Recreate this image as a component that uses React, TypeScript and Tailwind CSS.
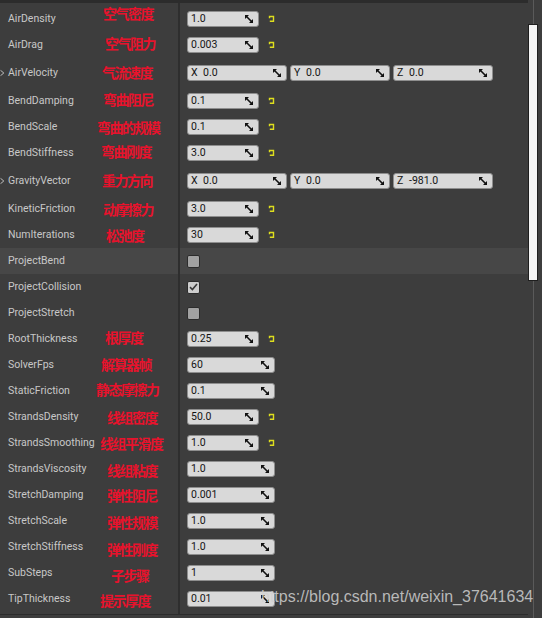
import React from 'react'

type Row = {
  label: string
  kind: 'num' | 'vec' | 'bool'
  value?: string
  reset?: boolean
  vec?: [string, string, string]
  checked?: boolean
  hover?: boolean
  ann?: string
  annCls?: string
}

const rows: Row[] = [
  { label: 'AirDensity', kind: 'num', value: '1.0', reset: true, ann: '空气密度', annCls: 'left-[103px] mt-[-6px]' },
  { label: 'AirDrag', kind: 'num', value: '0.003', reset: true, ann: '空气阻力', annCls: 'left-[105px] mt-[-2px]' },
  { label: 'AirVelocity', kind: 'vec', vec: ['0.0', '0.0', '0.0'], ann: '气流速度', annCls: 'left-[102px] mt-[-1px]' },
  { label: 'BendDamping', kind: 'num', value: '0.1', reset: true, ann: '弯曲阻尼', annCls: 'left-[103px] mt-[-2px]' },
  { label: 'BendScale', kind: 'num', value: '0.1', reset: true, ann: '弯曲的规模', annCls: 'left-[97px] mt-[0px]' },
  { label: 'BendStiffness', kind: 'num', value: '3.0', reset: true, ann: '弯曲刚度', annCls: 'left-[101px] mt-[-2px]' },
  { label: 'GravityVector', kind: 'vec', vec: ['0.0', '0.0', '-981.0'], ann: '重力方向', annCls: 'left-[102px] mt-[-1px]' },
  { label: 'KineticFriction', kind: 'num', value: '3.0', reset: true, ann: '动摩擦力', annCls: 'left-[103px] mt-[0px]' },
  { label: 'NumIterations', kind: 'num', value: '30', reset: true, ann: '松弛度', annCls: 'left-[106px] mt-[0px]' },
  { label: 'ProjectBend', kind: 'bool', hover: true },
  { label: 'ProjectCollision', kind: 'bool', checked: true },
  { label: 'ProjectStretch', kind: 'bool' },
  { label: 'RootThickness', kind: 'num', value: '0.25', reset: true, ann: '根厚度', annCls: 'left-[105px] mt-[-2px]' },
  { label: 'SolverFps', kind: 'num', value: '60', ann: '解算器帧', annCls: 'left-[101px] mt-[-1px]' },
  { label: 'StaticFriction', kind: 'num', value: '0.1', ann: '静态摩擦力', annCls: 'left-[96px] mt-[-2px]' },
  { label: 'StrandsDensity', kind: 'num', value: '50.0', reset: true, ann: '线组密度', annCls: 'left-[107px] mt-[0px]' },
  { label: 'StrandsSmoothing', kind: 'num', value: '1.0', reset: true, ann: '线组平滑度', annCls: 'left-[100px] mt-[0px]' },
  { label: 'StrandsViscosity', kind: 'num', value: '1.0', ann: '线组粘度', annCls: 'left-[107px] mt-[1px]' },
  { label: 'StretchDamping', kind: 'num', value: '0.001', ann: '弹性阻尼', annCls: 'left-[107px] mt-[0px]' },
  { label: 'StretchScale', kind: 'num', value: '1.0', ann: '弹性规模', annCls: 'left-[107px] mt-[1px]' },
  { label: 'StretchStiffness', kind: 'num', value: '1.0', ann: '弹性刚度', annCls: 'left-[107px] mt-[2px]' },
  { label: 'SubSteps', kind: 'num', value: '1', ann: '子步骤', annCls: 'left-[111px] mt-[2px]' },
  { label: 'TipThickness', kind: 'num', value: '0.01', ann: '提示厚度', annCls: 'left-[100px] mt-[1px]' },
]

function DragIcon() {
  return (
    <svg width="8" height="8" viewBox="0 0 8 8" className="shrink-0">
      <path d="M0 0 H4 L0 4 Z M8 8 H4 L8 4 Z" fill="#111" />
      <path d="M1.5 1.5 L6.5 6.5" stroke="#111" strokeWidth="1.6" />
    </svg>
  )
}

function ResetIcon() {
  return (
    <svg width="8" height="8" viewBox="0 0 8 8" className="ml-[9px] shrink-0">
      <path d="M1.5 3.2 V1.5 H5.5 V6.3 H1.8" fill="none" stroke="#dede1e" strokeWidth="1.4" />
    </svg>
  )
}

function NumField({ value, wide }: { value: string; wide: boolean }) {
  return (
    <div
      className={`flex h-[16px] items-center justify-between rounded-[3px] border border-[#8e8e8e] bg-[#d9d9d9] pl-[3px] pr-[5px] ${wide ? 'w-[88px]' : 'w-[72px]'}`}
    >
      <span className="text-[10.5px] leading-none text-[#141414]">{value}</span>
      <DragIcon />
    </div>
  )
}

function VecField({ axis, value }: { axis: string; value: string }) {
  return (
    <div className="flex h-[16px] w-[100px] items-center justify-between rounded-[3px] border border-[#8e8e8e] bg-[#d9d9d9] pl-[3px] pr-[5px]">
      <span className="flex items-center text-[10.5px] leading-none text-[#141414]">
        <span className="w-[12px]">{axis}</span>
        <span>{value}</span>
      </span>
      <DragIcon />
    </div>
  )
}

function Checkbox({ checked }: { checked?: boolean }) {
  return (
    <div
      className={`flex h-[13px] w-[13px] items-center justify-center rounded-[2px] border border-[#2c2c2c] ${checked ? 'bg-[#cdcdcd]' : 'bg-[#a2a2a2]'}`}
    >
      {checked && (
        <svg width="9" height="8" viewBox="0 0 9 8">
          <path d="M1 4.2 L3.4 6.5 L8 1" fill="none" stroke="#3a3a3a" strokeWidth="1.6" />
        </svg>
      )}
    </div>
  )
}

function PropertyRow({ row }: { row: Row }) {
  const height = row.kind === 'vec' ? 'h-[30px]' : 'h-[26px]'
  return (
    <div className={`flex ${height} ${row.hover ? 'bg-[#474747]' : ''}`}>
      <div className="relative flex w-[180px] shrink-0 items-center border-r-2 border-[#2e2e2e] pl-[8px]">
        {row.kind === 'vec' && (
          <svg width="5" height="7" viewBox="0 0 5 7" className="absolute left-0 top-1/2 -translate-y-1/2">
            <path d="M0.5 0.8 L3.8 3.5 L0.5 6.2" fill="none" stroke="#bdbdbd" strokeWidth="1" />
          </svg>
        )}
        <span className="text-[10.5px] leading-none text-[#c8c8c8]">{row.label}</span>
        {row.ann && (
          <span
            className={`absolute top-1/2 -translate-y-1/2 whitespace-nowrap font-['Noto_Sans_CJK_SC',sans-serif] text-[14px] font-bold leading-none tracking-[-1.5px] text-[#e8122c] ${row.annCls}`}
          >
            {row.ann}
          </span>
        )}
      </div>
      <div className="flex items-center pl-[7px]">
        {row.kind === 'num' && (
          <>
            <NumField value={row.value ?? ''} wide={!row.reset} />
            {row.reset && <ResetIcon />}
          </>
        )}
        {row.kind === 'vec' && row.vec && (
          <div className="flex gap-[3px]">
            <VecField axis="X" value={row.vec[0]} />
            <VecField axis="Y" value={row.vec[1]} />
            <VecField axis="Z" value={row.vec[2]} />
          </div>
        )}
        {row.kind === 'bool' && <Checkbox checked={row.checked} />}
      </div>
    </div>
  )
}

export default function App() {
  return (
    <div className="relative flex h-[618px] w-[542px] overflow-hidden bg-[#3d3d3d] font-['Roboto',sans-serif]">
      {/* Details panel */}
      <div className="flex w-[528px] shrink-0 flex-col">
        <div className="h-[3px] bg-[#2c2c2c]" />
        <div className="h-[3px] w-[180px] border-r-2 border-[#2e2e2e]" />
        {rows.map((row) => (
          <PropertyRow key={row.label} row={row} />
        ))}
        <div className="h-[2px] w-[180px] border-r-2 border-[#2e2e2e]" />
        <div className="h-[1px] bg-[#2c2c2c]" />
      </div>

      {/* Scrollbar */}
      <div className="flex w-[14px] flex-col">
        <div className="ml-[5px] h-[24px] w-px bg-[#5a5a5a]" />
        <div className="h-[257px] w-[10px] border border-[#1e1e1e] bg-[#f4f4f4]" />
        <div className="ml-[5px] w-px flex-1 bg-[#5a5a5a]" />
      </div>

      {/* Watermark */}
      <span className="absolute left-[261px] top-[589px] font-['Liberation_Sans',sans-serif] text-[16px] leading-none text-[#d0d0d0]/85">
        https://blog.csdn.net/weixin_37641634
      </span>
    </div>
  )
}
